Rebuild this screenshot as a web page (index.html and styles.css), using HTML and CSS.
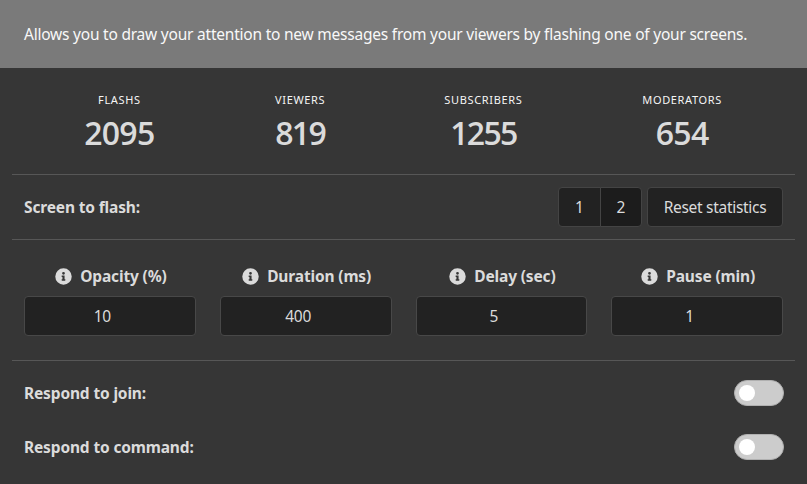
FILE: index.html
```html
<!DOCTYPE html>
<html lang="en">
<head>
<meta charset="utf-8">
<title>Flash settings</title>
<link rel="stylesheet" href="styles.css">
</head>
<body>
<svg class="defs" width="0" height="0"><symbol id="info" viewBox="0 0 512 512"><path fill="currentColor" d="M256 8a248 248 0 1 0 0 496 248 248 0 0 0 0-496zm0 110a42 42 0 1 1 0 84 42 42 0 0 1 0-84zm56 254c0 7-5 12-12 12h-88c-7 0-12-5-12-12v-24c0-7 5-12 12-12h12v-64h-12c-7 0-12-5-12-12v-24c0-7 5-12 12-12h64c7 0 12 5 12 12v100h12c7 0 12 5 12 12z"/></symbol></svg>
<header class="banner"><span class="banner-text">Allows you to draw your attention to new messages from your viewers by flashing one of your screens.</span></header>
<main class="content">
<section class="stats">
<div class="stat stat-flashs"><p class="heading">Flashs</p><p class="number">2095</p></div>
<div class="stat stat-viewers"><p class="heading">Viewers</p><p class="number tight">819</p></div>
<div class="stat stat-subscribers"><p class="heading">Subscribers</p><p class="number tight">1255</p></div>
<div class="stat stat-moderators"><p class="heading">Moderators</p><p class="number">654</p></div>
</section>
<section class="screens">
<span class="label">Screen to flash:</span>
<div class="buttons"><div class="group"><button class="button">1</button><button class="button active">2</button></div><button class="button reset"><span>Reset statistics</span></button></div>
</section>
<section class="fields">
<div class="field"><div class="field-label"><svg class="icon"><use href="#info"/></svg><span class="label">Opacity (%)</span></div><div class="input">10</div></div>
<div class="field"><div class="field-label"><svg class="icon"><use href="#info"/></svg><span class="label">Duration (ms)</span></div><div class="input">400</div></div>
<div class="field"><div class="field-label"><svg class="icon"><use href="#info"/></svg><span class="label">Delay (sec)</span></div><div class="input">5</div></div>
<div class="field"><div class="field-label"><svg class="icon"><use href="#info"/></svg><span class="label">Pause (min)</span></div><div class="input">1</div></div>
</section>
<section class="options">
<div class="option"><span class="label">Respond to join:</span><span class="switch"></span></div>
<div class="option"><span class="label">Respond to command:</span><span class="switch"></span></div>
</section>
</main>
</body>
</html>
```
FILE: styles.css
```css
* { box-sizing: border-box; }
body { margin: 0; height: 484px; overflow: hidden; background: #363636; color: #dbdbdb; font: 16px/24px "Noto Sans", "Open Sans", sans-serif; }
p { margin: 0; }
.defs { display: block; }
.banner { height: 68px; padding: 22px 24px; background: #7a7a7a; color: #f8f8f8; white-space: nowrap; font-size: 15.5px; letter-spacing: -0.22px; }
.content { padding: 0 12px; }
.stats { height: 107px; padding: 24px 12px 0; display: flex; border-bottom: 1px solid #575757; text-align: center; }
.stat-flashs { width: 191px; }
.stat-viewers { width: 171px; }
.stat-subscribers { width: 196px; }
.stat-moderators { width: 202px; }
.heading { font-size: 11px; line-height: 16px; letter-spacing: 0.65px; text-transform: uppercase; color: #f5f5f5; }
.number { margin-top: 7px; font-family: "Open Sans", "Noto Sans", sans-serif; font-size: 32px; line-height: 36px; font-weight: 600; letter-spacing: -0.7px; }
.number.tight { letter-spacing: -1.7px; }
.screens { height: 65px; padding: 0 12px; display: flex; align-items: center; justify-content: space-between; border-bottom: 1px solid #575757; }
.label { font-weight: 700; font-size: 15.5px; letter-spacing: -0.15px; white-space: nowrap; }
.buttons { display: flex; gap: 5px; }
.group { display: flex; }
.button { width: 43px; height: 40px; padding: 0; border: 1px solid #444; border-radius: 4px 0 0 4px; background: #222; color: #dbdbdb; font: inherit; font-size: 15.5px; }
.button.active { width: 42px; margin-left: -1px; border-radius: 0 4px 4px 0; background: #1c1c1c; }
.button.reset { width: 136px; border-radius: 4px; letter-spacing: -0.3px; white-space: nowrap; }
.fields { height: 121px; padding: 24px 12px 0; display: grid; grid-template-columns: repeat(4, 1fr); gap: 24px; border-bottom: 1px solid #575757; }
.field-label { height: 24px; display: flex; align-items: center; justify-content: center; gap: 8px; padding-left: 2px; }
.icon { width: 17px; height: 17px; }
.input { height: 40px; margin-top: 8px; border: 1px solid #484848; border-radius: 4px; background: #222; padding: 7px 15px 0 0; text-align: center; font-size: 15.5px; letter-spacing: -0.2px; }
.options { padding: 19px 11px 0 12px; display: flex; flex-direction: column; gap: 28px; }
.option { height: 26px; display: flex; align-items: center; justify-content: space-between; }
.switch { width: 50px; height: 26px; padding: 4px; border: 1px solid #b0b0b0; border-radius: 13px; background: #ccc; }
.switch::before { content: ""; display: block; width: 16px; height: 16px; border-radius: 50%; background: #fff; }
```
